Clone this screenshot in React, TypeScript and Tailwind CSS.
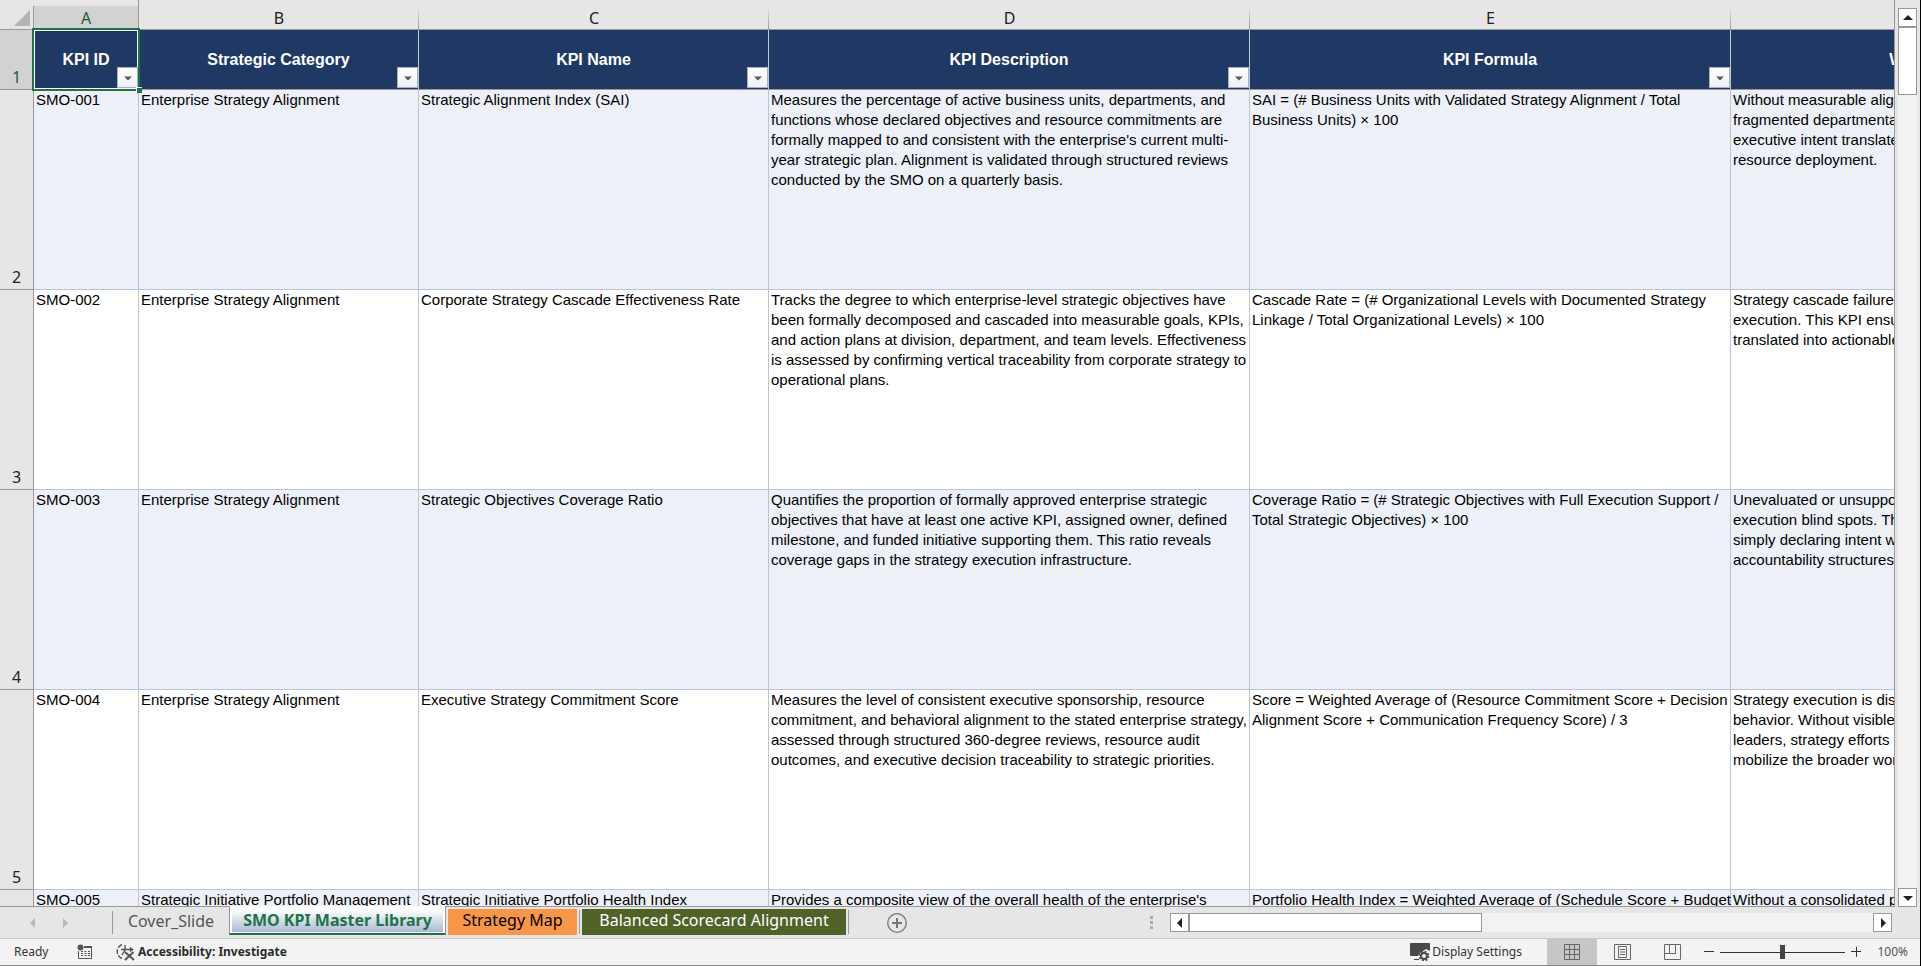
import React from "react";

type Row = { id: string; num: number; cells: string[] };

const columns = [
  { letter: "A", title: "KPI ID" },
  { letter: "B", title: "Strategic Category" },
  { letter: "C", title: "KPI Name" },
  { letter: "D", title: "KPI Description" },
  { letter: "E", title: "KPI Formula" },
  { letter: "F", title: "Why This KPI Matters" },
];

const rows: Row[] = [
  {
    id: "SMO-001",
    num: 2,
    cells: [
      "Enterprise Strategy Alignment",
      "Strategic Alignment Index (SAI)",
      "Measures the percentage of active business units, departments, and\nfunctions whose declared objectives and resource commitments are\nformally mapped to and consistent with the enterprise's current multi-\nyear strategic plan. Alignment is validated through structured reviews\nconducted by the SMO on a quarterly basis.",
      "SAI = (# Business Units with Validated Strategy Alignment / Total\nBusiness Units) × 100",
      "Without measurable alignment,\nfragmented departmental\nexecutive intent translates\nresource deployment.",
    ],
  },
  {
    id: "SMO-002",
    num: 3,
    cells: [
      "Enterprise Strategy Alignment",
      "Corporate Strategy Cascade Effectiveness Rate",
      "Tracks the degree to which enterprise-level strategic objectives have\nbeen formally decomposed and cascaded into measurable goals, KPIs,\nand action plans at division, department, and team levels. Effectiveness\nis assessed by confirming vertical traceability from corporate strategy to\noperational plans.",
      "Cascade Rate = (# Organizational Levels with Documented Strategy\nLinkage / Total Organizational Levels) × 100",
      "Strategy cascade failure is\nexecution. This KPI ensures\ntranslated into actionable",
    ],
  },
  {
    id: "SMO-003",
    num: 4,
    cells: [
      "Enterprise Strategy Alignment",
      "Strategic Objectives Coverage Ratio",
      "Quantifies the proportion of formally approved enterprise strategic\nobjectives that have at least one active KPI, assigned owner, defined\nmilestone, and funded initiative supporting them. This ratio reveals\ncoverage gaps in the strategy execution infrastructure.",
      "Coverage Ratio = (# Strategic Objectives with Full Execution Support /\nTotal Strategic Objectives) × 100",
      "Unevaluated or unsupported\nexecution blind spots. This\nsimply declaring intent without\naccountability structures.",
    ],
  },
  {
    id: "SMO-004",
    num: 5,
    cells: [
      "Enterprise Strategy Alignment",
      "Executive Strategy Commitment Score",
      "Measures the level of consistent executive sponsorship, resource\ncommitment, and behavioral alignment to the stated enterprise strategy,\nassessed through structured 360-degree reviews, resource audit\noutcomes, and executive decision traceability to strategic priorities.",
      "Score = Weighted Average of (Resource Commitment Score + Decision\nAlignment Score + Communication Frequency Score) / 3",
      "Strategy execution is displayed\nbehavior. Without visible\nleaders, strategy efforts lose\nmobilize the broader workforce",
    ],
  },
  {
    id: "SMO-005",
    num: 6,
    cells: [
      "Strategic Initiative Portfolio Management",
      "Strategic Initiative Portfolio Health Index",
      "Provides a composite view of the overall health of the enterprise's",
      "Portfolio Health Index = Weighted Average of (Schedule Score + Budget",
      "Without a consolidated portfolio",
    ],
  },
];

function Triangle({ dir, className }: { dir: "up" | "down" | "left" | "right"; className: string }) {
  const points = {
    up: "5,2 10,7 0,7",
    down: "0,3 10,3 5,8",
    left: "2,5 7,0 7,10",
    right: "8,5 3,0 3,10",
  }[dir];
  return (
    <svg viewBox="0 0 10 10" className={className} fill="currentColor" aria-hidden="true">
      <polygon points={points} />
    </svg>
  );
}

function FilterButton({ label }: { label: string }) {
  return (
    <button
      aria-label={"Filter " + label}
      className="absolute right-0 bottom-px flex h-[21px] w-[21px] items-center justify-center border border-[#a9b1c0] bg-linear-to-b from-white to-[#eef0f5] text-[#5a5a5a]"
    >
      <Triangle dir="down" className="h-2 w-2" />
    </button>
  );
}

function Sheet() {
  return (
    <div className="min-h-0 min-w-0 flex-1 overflow-hidden border-r border-b border-[#999]">
      <table className="w-[2212px] table-fixed border-separate border-spacing-0 font-['Liberation_Sans',Arial,sans-serif] text-[15px] leading-5 text-black">
        <colgroup>
          <col className="w-[34px]" />
          <col className="w-[105px]" />
          <col className="w-[280px]" />
          <col className="w-[350px]" />
          <col className="w-[481px]" />
          <col className="w-[481px]" />
          <col className="w-[481px]" />
        </colgroup>
        <thead>
          <tr className="h-[30px] bg-[#e6e6e6] font-['Noto_Sans',sans-serif] text-[16px] text-[#222]">
            <th className="border-b border-[#999] p-0">
              <svg viewBox="0 0 34 29" className="block h-[29px] w-[34px]" aria-hidden="true">
                <polygon points="30,10 30,26 14,26" fill="#b4b4b4" />
                <path d="M33.500 6V29" stroke="#999" />
              </svg>
            </th>
            {columns.map((c, i) => (
              <th
                key={c.letter}
                scope="col"
                className={
                  i === 0
                    ? "border-r border-b border-[#999] border-b-[#217346] bg-[linear-gradient(#e6e6e6_6px,#d2d2d2_6px)] p-0 pt-1.5 font-normal text-[#1e5c3c]"
                    : "border-b border-[#999] bg-[linear-gradient(#e6e6e6_6px,#999)] bg-[length:1px_100%] bg-right bg-no-repeat p-0 pt-1.5 font-normal"
                }
              >
                {c.letter}
              </th>
            ))}
          </tr>
          <tr className="h-[60px] bg-[#203864] text-[16px] text-white">
            <th className="border-r border-b border-[#999] bg-[#d2d2d2] p-0 pb-0.5 text-center align-bottom font-['Noto_Sans',sans-serif] font-normal text-[#1e5c3c]">
              1
            </th>
            {columns.map((c, i) => (
              <th
                key={c.letter}
                className={
                  i === 0
                    ? "relative border-r border-b border-[#217346] p-0 font-bold"
                    : "relative border-r border-b border-[#bfc8d8] border-b-[#999] p-0 font-bold"
                }
              >
                {i === 0 && (
                  <span className="absolute -inset-0.5 border-2 border-[#217346] after:absolute after:inset-0 after:border after:border-white" />
                )}
                {c.title}
                <FilterButton label={c.title} />
                {i === 0 && (
                  <span className="absolute -right-1 -bottom-1 z-10 h-[6px] w-[6px] border-t border-l border-white bg-[#217346]" />
                )}
              </th>
            ))}
          </tr>
        </thead>
        <tbody>
          {rows.map((r, i) => (
            <tr key={r.id} className={i % 2 === 0 ? "h-[200px] bg-[#edf1f7]" : "h-[200px] bg-white"}>
              <th className="border-r border-b border-[#999] bg-[#e6e6e6] p-0 pb-0.5 text-center align-bottom font-['Noto_Sans',sans-serif] text-[16px] font-normal text-[#222]">
                {r.num}
              </th>
              {[r.id, ...r.cells].map((text, j) => (
                <td key={j} className="border-r border-b border-[#b9c5d9] p-0 pl-0.5 align-top whitespace-pre">
                  {text}
                </td>
              ))}
            </tr>
          ))}
        </tbody>
      </table>
    </div>
  );
}

function VerticalScroll() {
  return (
    <div className="flex w-[25px] shrink-0 flex-col px-[3px] pt-2">
      <button aria-label="Scroll up" className="flex h-[19px] items-center justify-center border border-[#999] bg-white text-[#222]">
        <Triangle dir="up" className="h-2.5 w-2.5" />
      </button>
      <div className="flex-1 bg-[#f2f2f2]">
        <div className="h-[68px] border border-[#999] bg-white" />
      </div>
      <button aria-label="Scroll down" className="flex h-[19px] items-center justify-center border border-[#999] bg-white text-[#222]">
        <Triangle dir="down" className="h-2.5 w-2.5" />
      </button>
    </div>
  );
}

function TabBar() {
  return (
    <div className="flex h-8 shrink-0 border-b border-[#c6c6c6] text-[16px] leading-5">
      <div className="flex w-[112px] items-center gap-[22px] pl-[28px] text-[#b8b8b8]">
        <button aria-label="Previous sheets"><Triangle dir="left" className="h-2.5 w-2.5" /></button>
        <button aria-label="Next sheets"><Triangle dir="right" className="h-2.5 w-2.5" /></button>
      </div>
      <button className="my-1 flex w-[117px] items-start justify-center border-l border-[#999] text-[#555]">Cover_Slide</button>
      <button className="relative z-10 -mt-px h-[29px] w-[217px] border-x border-b-2 border-[#999] border-b-[#217346] bg-white px-0.5 pt-1 pb-px font-bold text-[#217346]">
        <span className="block h-[22px] bg-linear-to-b from-white to-[#a9b9d4] leading-5">SMO KPI Master Library</span>
      </button>
      <div className="flex flex-1 items-start pt-0.5">
        <button className="ml-0.5 h-[26px] w-[129px] bg-[#f79646] pb-1 text-black">Strategy Map</button>
        <span className="mx-0.5 mt-px h-6 w-px bg-[#999]" />
        <button className="h-[26px] w-[264px] bg-[#4f6228] pb-1 text-white">Balanced Scorecard Alignment</button>
        <span className="mx-0.5 mt-px h-6 w-px bg-[#999]" />
        <button aria-label="New sheet" className="mt-1 ml-[36px] text-[#777]">
          <svg viewBox="0 0 20 20" className="h-5 w-5" fill="none" stroke="currentColor">
            <circle cx="10" cy="10" r="9.300" strokeWidth="1.300" />
            <path d="M10 5V15M5 10H15" strokeWidth="2" />
          </svg>
        </button>
      </div>
      <div className="flex w-[770px] items-start pt-[6px] pr-[28px]">
        <svg viewBox="0 0 3 13" className="mt-[3px] mr-[17px] h-[13px] w-[3px] shrink-0" fill="#aaa" aria-hidden="true">
          <path d="M0 0h3v3H0zM0 5h3v3H0zM0 10h3v3H0z" />
        </svg>
        <button aria-label="Scroll left" className="flex h-[19px] w-[19px] shrink-0 items-center justify-center border border-[#999] bg-white text-[#222]">
          <Triangle dir="left" className="h-2.5 w-2.5" />
        </button>
        <div className="h-[19px] flex-1 bg-[#f2f2f2]">
          <div className="h-[19px] w-[293px] border border-[#999] bg-white" />
        </div>
        <button aria-label="Scroll right" className="flex h-[19px] w-[19px] shrink-0 items-center justify-center border border-[#999] bg-white text-[#222]">
          <Triangle dir="right" className="h-2.5 w-2.5" />
        </button>
      </div>
    </div>
  );
}

function StatusBar() {
  return (
    <div className="flex h-[27px] shrink-0 items-center border-b border-[#8a8a8a] bg-[#f3f3f3] text-[12px] text-[#333]">
      <span className="w-[77px] pl-[14px]">Ready</span>
      <button aria-label="Record macro" className="w-[38px]">
        <svg viewBox="0 0 16 16" className="h-4 w-4" fill="none" stroke="#555" aria-hidden="true">
          <path d="M7 2.500H14.500V14.500H1.500V7" />
          <path d="M7 3H15" strokeWidth="2" />
          <path d="M4 7.500H6M7.500 7.500H9.500M11 7.500H13M4 9.500H6M7.500 9.500H9.500M11 9.500H13M4 11.500H6M7.500 11.500H9.500M11 11.500H13" />
          <circle cx="3.500" cy="3.500" r="3" fill="#555" stroke="none" />
        </svg>
      </button>
      <button className="flex flex-1 items-center gap-[3px] font-bold text-[#2b2b2b]">
        <svg viewBox="0 0 20 18" className="h-[18px] w-5" fill="none" stroke="#555" strokeWidth="1.400" aria-hidden="true">
          <path d="M7 1.500A7.500 7.500 0 0 0 7 15.500" strokeDasharray="5 1.500" />
          <path d="M6 6.500H17M15 4.500L17.500 6.500L15 8.500M10 2V7L7 12" />
          <path d="M10 9L19 17M18.500 9L10 17" strokeWidth="2" />
        </svg>
        Accessibility: Investigate
      </button>
      <button className="flex items-center gap-0.5 pr-[25px]">
        <svg viewBox="0 0 20 18" className="h-[18px] w-5" aria-hidden="true">
          <path d="M1 0H19Q20 0 20 1V8L16 6L9 11L8 13H1Q0 13 0 12V1Q0 0 1 0Z" fill="#4a4a4a" />
          <path d="M4 16.500H9" stroke="#4a4a4a" />
          <circle cx="14" cy="13" r="3" fill="none" stroke="#4a4a4a" strokeWidth="2" />
          <circle cx="14" cy="13" r="4.500" fill="none" stroke="#4a4a4a" strokeWidth="1.800" strokeDasharray="1.800 1.740" />
        </svg>
        Display Settings
      </button>
      <button aria-label="Normal view" className="flex h-full w-[50px] items-center justify-center bg-[#c6c6c6]">
        <svg viewBox="0 0 16 16" className="h-4 w-4" fill="none" stroke="#666" aria-hidden="true">
          <path d="M.5.5H15.500V15.500H.5ZM5.500 0V16M10.500 0V16M0 5.500H16M0 10.500H16" />
        </svg>
      </button>
      <button aria-label="Page layout view" className="flex h-full w-[50px] items-center justify-center">
        <svg viewBox="0 0 17 16" className="h-4 w-[17px]" fill="none" stroke="#666" aria-hidden="true">
          <path d="M.5.5H16.500V15.500H.5ZM4.500 2.500H12.500V13.500H4.500ZM6 5.500H11M6 8H11M6 10.500H11" />
        </svg>
      </button>
      <button aria-label="Page break preview" className="flex h-full w-[50px] items-center justify-center">
        <svg viewBox="0 0 17 16" className="h-4 w-[17px]" fill="none" stroke="#666" aria-hidden="true">
          <path d="M.5.5H16.500V15.500H.5ZM5.500 0V9.500M11.500 0V9.500M0 9.500H11.500" />
        </svg>
      </button>
      <div className="flex items-center pl-[7px]">
        <button aria-label="Zoom out">
          <svg viewBox="0 0 10 10" className="h-2.5 w-2.5" stroke="#333" aria-hidden="true"><path d="M0 4.500H10" /></svg>
        </button>
        <label className="relative mx-1.5 flex h-5 w-[125px] items-center">
          <span className="sr-only">Zoom</span>
          <input
            type="range"
            min="10"
            max="190"
            defaultValue="100"
            className="h-px w-full appearance-none bg-[#333] [&::-webkit-slider-thumb]:h-[14px] [&::-webkit-slider-thumb]:w-[5px] [&::-webkit-slider-thumb]:appearance-none [&::-webkit-slider-thumb]:bg-[#444]"
          />
        </label>
        <button aria-label="Zoom in">
          <svg viewBox="0 0 10 10" className="h-2.5 w-2.5" stroke="#333" aria-hidden="true"><path d="M0 4.500H10M5.500 0V10" /></svg>
        </button>
      </div>
      <span className="w-[59px] pr-3 text-right text-[#555]">100%</span>
    </div>
  );
}

export default function App() {
  return (
    <div className="flex h-screen flex-col overflow-hidden border-r border-black bg-[#e6e6e6] font-['Noto_Sans',sans-serif]">
      <div className="flex min-h-0 flex-1">
        <Sheet />
        <VerticalScroll />
      </div>
      <TabBar />
      <StatusBar />
    </div>
  );
}
